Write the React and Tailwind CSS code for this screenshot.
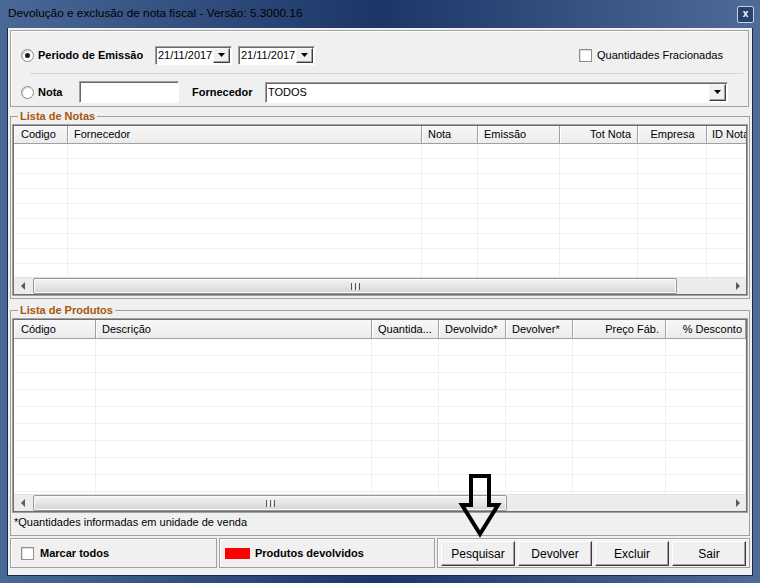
import React from "react";

const notasCols = [
  { label: "Codigo", w: "w-[54px]", a: "justify-start pl-[6px]" },
  { label: "Fornecedor", w: "w-[354px]", a: "justify-start pl-[5px]" },
  { label: "Nota", w: "w-[56px]", a: "justify-start pl-[5px]" },
  { label: "Emissão", w: "w-[82px]", a: "justify-start pl-[5px]" },
  { label: "Tot Nota", w: "w-[78px]", a: "justify-end pr-[6px]" },
  { label: "Empresa", w: "w-[69px]", a: "justify-center" },
  { label: "ID Nota", w: "w-[74px]", a: "justify-start pl-[4px]" },
];

const prodCols = [
  { label: "Código", w: "w-[82px]", a: "justify-start pl-[6px]" },
  { label: "Descrição", w: "w-[276px]", a: "justify-start pl-[5px]" },
  { label: "Quantida...", w: "w-[67px]", a: "justify-start pl-[5px]" },
  { label: "Devolvido*", w: "w-[67px]", a: "justify-start pl-[5px]" },
  { label: "Devolver*", w: "w-[67px]", a: "justify-start pl-[5px]" },
  { label: "Preço Fáb.", w: "w-[93px]", a: "justify-end pr-[6px]" },
  { label: "% Desconto", w: "w-[80px]", a: "justify-end pr-[3px]" },
  { label: "", w: "w-[80px]", a: "justify-start" },
];

function Radio({ checked }) {
  return (
    <span className="w-[13px] h-[13px] rounded-full border border-[#8c8c8c] bg-white shrink-0 flex items-center justify-center shadow-[inset_1px_1px_1px_#cfcfcf]">
      {checked && <span className="w-[5px] h-[5px] rounded-full bg-[#1b1b1b]" />}
    </span>
  );
}

function Check() {
  return (
    <span className="w-[13px] h-[13px] bg-white border border-[#8e8f8f] shrink-0 shadow-[inset_1px_1px_0_#dcdcdc]" />
  );
}

function DropBtn({ cls }) {
  return (
    <span
      className={
        "flex items-center justify-center bg-[#f0f0f0] border border-t-[#f7f7f7] border-l-[#f7f7f7] border-r-[#404040] border-b-[#404040] shadow-[inset_-1px_-1px_0_#a0a0a0] shrink-0 " +
        cls
      }
    >
      <svg width="7" height="4" viewBox="0 0 7 4">
        <path d="M0 0h7L3.5 4z" fill="#000" />
      </svg>
    </span>
  );
}

function Sunken({ cls, children }) {
  return (
    <div
      className={
        "flex items-center bg-white border border-t-[#a0a0a0] border-l-[#a0a0a0] border-r-white border-b-white shadow-[inset_1px_1px_0_#696969] " +
        cls
      }
    >
      {children}
    </div>
  );
}

function DateCombo({ value }) {
  return (
    <Sunken cls="w-[77px] h-[19px] pl-[2px] pr-[1px] shrink-0">
      <span className="text-[11px] text-black leading-none pt-[1px]">{value}</span>
      <DropBtn cls="ml-auto w-[17px] h-[15px]" />
    </Sunken>
  );
}

function Arrow({ dir }) {
  return (
    <svg width="5" height="8" viewBox="0 0 5 8">
      {dir === "left" ? (
        <path d="M4 0v8L0 4z" fill="#5a5a5a" />
      ) : (
        <path d="M1 0v8l4-4z" fill="#5a5a5a" />
      )}
    </svg>
  );
}

function Scrollbar({ thumb }) {
  return (
    <div className="h-[17px] shrink-0 flex bg-[#ececec] border-t border-[#e2e2e2]">
      <div className="w-[19px] shrink-0 flex items-center justify-center">
        <Arrow dir="left" />
      </div>
      <div
        className={
          "h-full shrink-0 rounded-[2px] border border-[#979797] bg-gradient-to-b from-[#f4f4f4] via-[#e6e6e6] to-[#d4d4d4] flex items-center justify-center shadow-[inset_0_0_0_1px_#fbfbfb] " +
          thumb
        }
      >
        <div className="flex gap-[1px]">
          <span className="w-px h-[7px] bg-[#555]" />
          <span className="w-px h-[7px] bg-[#f8f8f8]" />
          <span className="w-px h-[7px] bg-[#555]" />
          <span className="w-px h-[7px] bg-[#f8f8f8]" />
          <span className="w-px h-[7px] bg-[#555]" />
        </div>
      </div>
      <div className="flex-1 min-w-0" />
      <div className="w-[17px] shrink-0 flex items-center justify-center">
        <Arrow dir="right" />
      </div>
    </div>
  );
}

function Grid({ cols, height, headerH, rowH, rows, thumb }) {
  return (
    <div className={"w-full min-w-0 border border-[#a0a0a0] flex flex-col overflow-hidden " + height}>
      <div className="flex-1 min-w-0 border border-[#6f6f6f] flex flex-col overflow-hidden bg-white">
        <div className={"flex shrink-0 bg-gradient-to-b from-[#f7f7f7] to-[#ebebeb] border-b border-[#a0a0a0] overflow-hidden " + headerH}>
          {cols.map((c, i) => (
            <div
              key={i}
              className={
                "shrink-0 flex items-center border-l border-l-white border-r border-r-[#a0a0a0] text-[11px] text-black whitespace-nowrap overflow-hidden " +
                c.w +
                " " +
                c.a
              }
            >
              {c.label}
            </div>
          ))}
        </div>
        <div className="flex-1 overflow-hidden">
          {Array.from({ length: rows }).map((_, r) => (
            <div key={r} className={"flex border-b border-[#f0f0f0] " + rowH}>
              {cols.map((c, i) => (
                <div key={i} className={"shrink-0 h-full border-r border-[#f0f0f0] " + c.w} />
              ))}
            </div>
          ))}
        </div>
        <Scrollbar thumb={thumb} />
      </div>
    </div>
  );
}

function Button({ children }) {
  return (
    <button className="w-[74px] h-[25px] bg-[#f0f0f0] border border-t-white border-l-white border-r-[#3c3c3c] border-b-[#3c3c3c] shadow-[inset_-1px_-1px_0_#a0a0a0] text-[12px] text-black flex items-center justify-center">
      {children}
    </button>
  );
}

export default function App() {
  return (
    <div className="relative w-[760px] h-[583px] flex flex-col overflow-hidden bg-gradient-to-r from-[#4a6996] via-[#1b3667] to-[#4f6c98] font-['Liberation_Sans',Arial,sans-serif]">
      {/* title bar */}
      <div className="h-[28px] shrink-0 flex items-center pl-[8px] pr-[6px]">
        <span className="text-[11.8px] text-black leading-none">
          Devolução e exclusão de nota fiscal - Versão: 5.3000.16
        </span>
        <span className="ml-auto w-[17px] h-[17px] border border-[#c9d2e2] rounded-[2px] bg-[#26426f] flex items-center justify-center text-white text-[10px] font-bold leading-none pb-[1px]">
          x
        </span>
      </div>

      {/* client */}
      <div className="flex-1 min-w-0 mx-[7px] mb-[7px] border-x border-b border-[#142a52] bg-[#f0f0f0] flex flex-col pl-[2px] pr-[2px] pt-[2px] overflow-hidden">
        {/* top panel */}
        <div className="h-[77px] mr-[1px] border border-[#a0a0a0] shadow-[inset_1px_1px_0_#ffffff] flex flex-col pt-[14px] pl-[10px]">
          <div className="h-[20px] flex items-center">
            <Radio checked />
            <span className="ml-[4px] w-[117px] shrink-0 text-[11px] font-bold text-black">Periodo de Emissão</span>
            <DateCombo value="21/11/2017" />
            <div className="w-[6px] shrink-0" />
            <DateCombo value="21/11/2017" />
            <div className="ml-[264px] flex items-center">
              <Check />
              <span className="ml-[5px] text-[11px] text-black whitespace-nowrap">Quantidades Fracionadas</span>
            </div>
          </div>
          <div className="mt-[8px] ml-[9px] mr-[5px] h-px bg-[#cdd8e2]" />
          <div className="mt-[7px] h-[22px] flex items-center">
            <Radio />
            <span className="ml-[4px] w-[41px] shrink-0 text-[11px] font-bold text-black">Nota</span>
            <Sunken cls="w-[100px] h-[22px] shrink-0" />
            <span className="ml-[13px] w-[73px] shrink-0 text-[11px] font-bold text-black">Fornecedor</span>
            <Sunken cls="w-[463px] h-[21px] pl-[2px] pr-[1px] shrink-0">
              <span className="text-[11px] text-black leading-none">TODOS</span>
              <DropBtn cls="ml-auto w-[17px] h-[17px]" />
            </Sunken>
          </div>
        </div>

        {/* Lista de Notas */}
        <fieldset className="mt-[2px] min-w-0 border border-[#a0a0a0] px-[1px] pb-[2px]">
          <legend className="ml-[6px] px-[2px] text-[11px] font-bold leading-[14px] text-[#a5570c]">
            Lista de Notas
          </legend>
          <div className="mt-[1px] min-w-0">
            <Grid cols={notasCols} height="h-[172px]" headerH="h-[18px]" rowH="h-[15px]" rows={9} thumb="w-[644px]" />
          </div>
        </fieldset>

        {/* Lista de Produtos */}
        <fieldset className="mt-[4px] min-w-0 border border-[#a0a0a0] px-[1px]">
          <legend className="ml-[6px] px-[2px] text-[11px] font-bold leading-[14px] text-[#a5570c]">
            Lista de Produtos
          </legend>
          <div className="mt-[1px] min-w-0">
            <Grid cols={prodCols} height="h-[195px]" headerH="h-[19px]" rowH="h-[17px]" rows={10} thumb="w-[474px]" />
          </div>
          <div className="h-[22px] pl-[2px] pt-[2px] text-[11px] leading-[14px] text-black">
            *Quantidades informadas em unidade de venda
          </div>
        </fieldset>

        {/* bottom bar */}
        <div className="mt-[2px] h-[30px] flex gap-[2px]">
          <div className="w-[207px] shrink-0 border border-[#a0a0a0] shadow-[inset_1px_1px_0_#ffffff] flex items-center pl-[10px]">
            <Check />
            <span className="ml-[6px] text-[11px] font-bold text-black">Marcar todos</span>
          </div>
          <div className="w-[216px] shrink-0 border border-[#a0a0a0] shadow-[inset_1px_1px_0_#ffffff] flex items-center pl-[5px]">
            <span className="w-[25px] h-[11px] bg-[#ff0000]" />
            <span className="ml-[5px] text-[11px] font-bold text-black">Produtos devolvidos</span>
          </div>
          <div className="w-[313px] shrink-0 border border-[#a0a0a0] shadow-[inset_1px_1px_0_#ffffff] flex items-start pt-[2px] pl-[3px] gap-[3px]">
            <Button>Pesquisar</Button>
            <Button>Devolver</Button>
            <Button>Excluir</Button>
            <Button>Sair</Button>
          </div>
        </div>
      </div>

      {/* arrow annotation overlay */}
      <svg className="absolute left-[458px] top-[471px]" width="44" height="70" viewBox="0 0 44 70">
        <path d="M13 5H31V34H40L22 63L4 34H13Z" fill="none" stroke="#000" strokeWidth="4" strokeLinejoin="miter" />
      </svg>
    </div>
  );
}
